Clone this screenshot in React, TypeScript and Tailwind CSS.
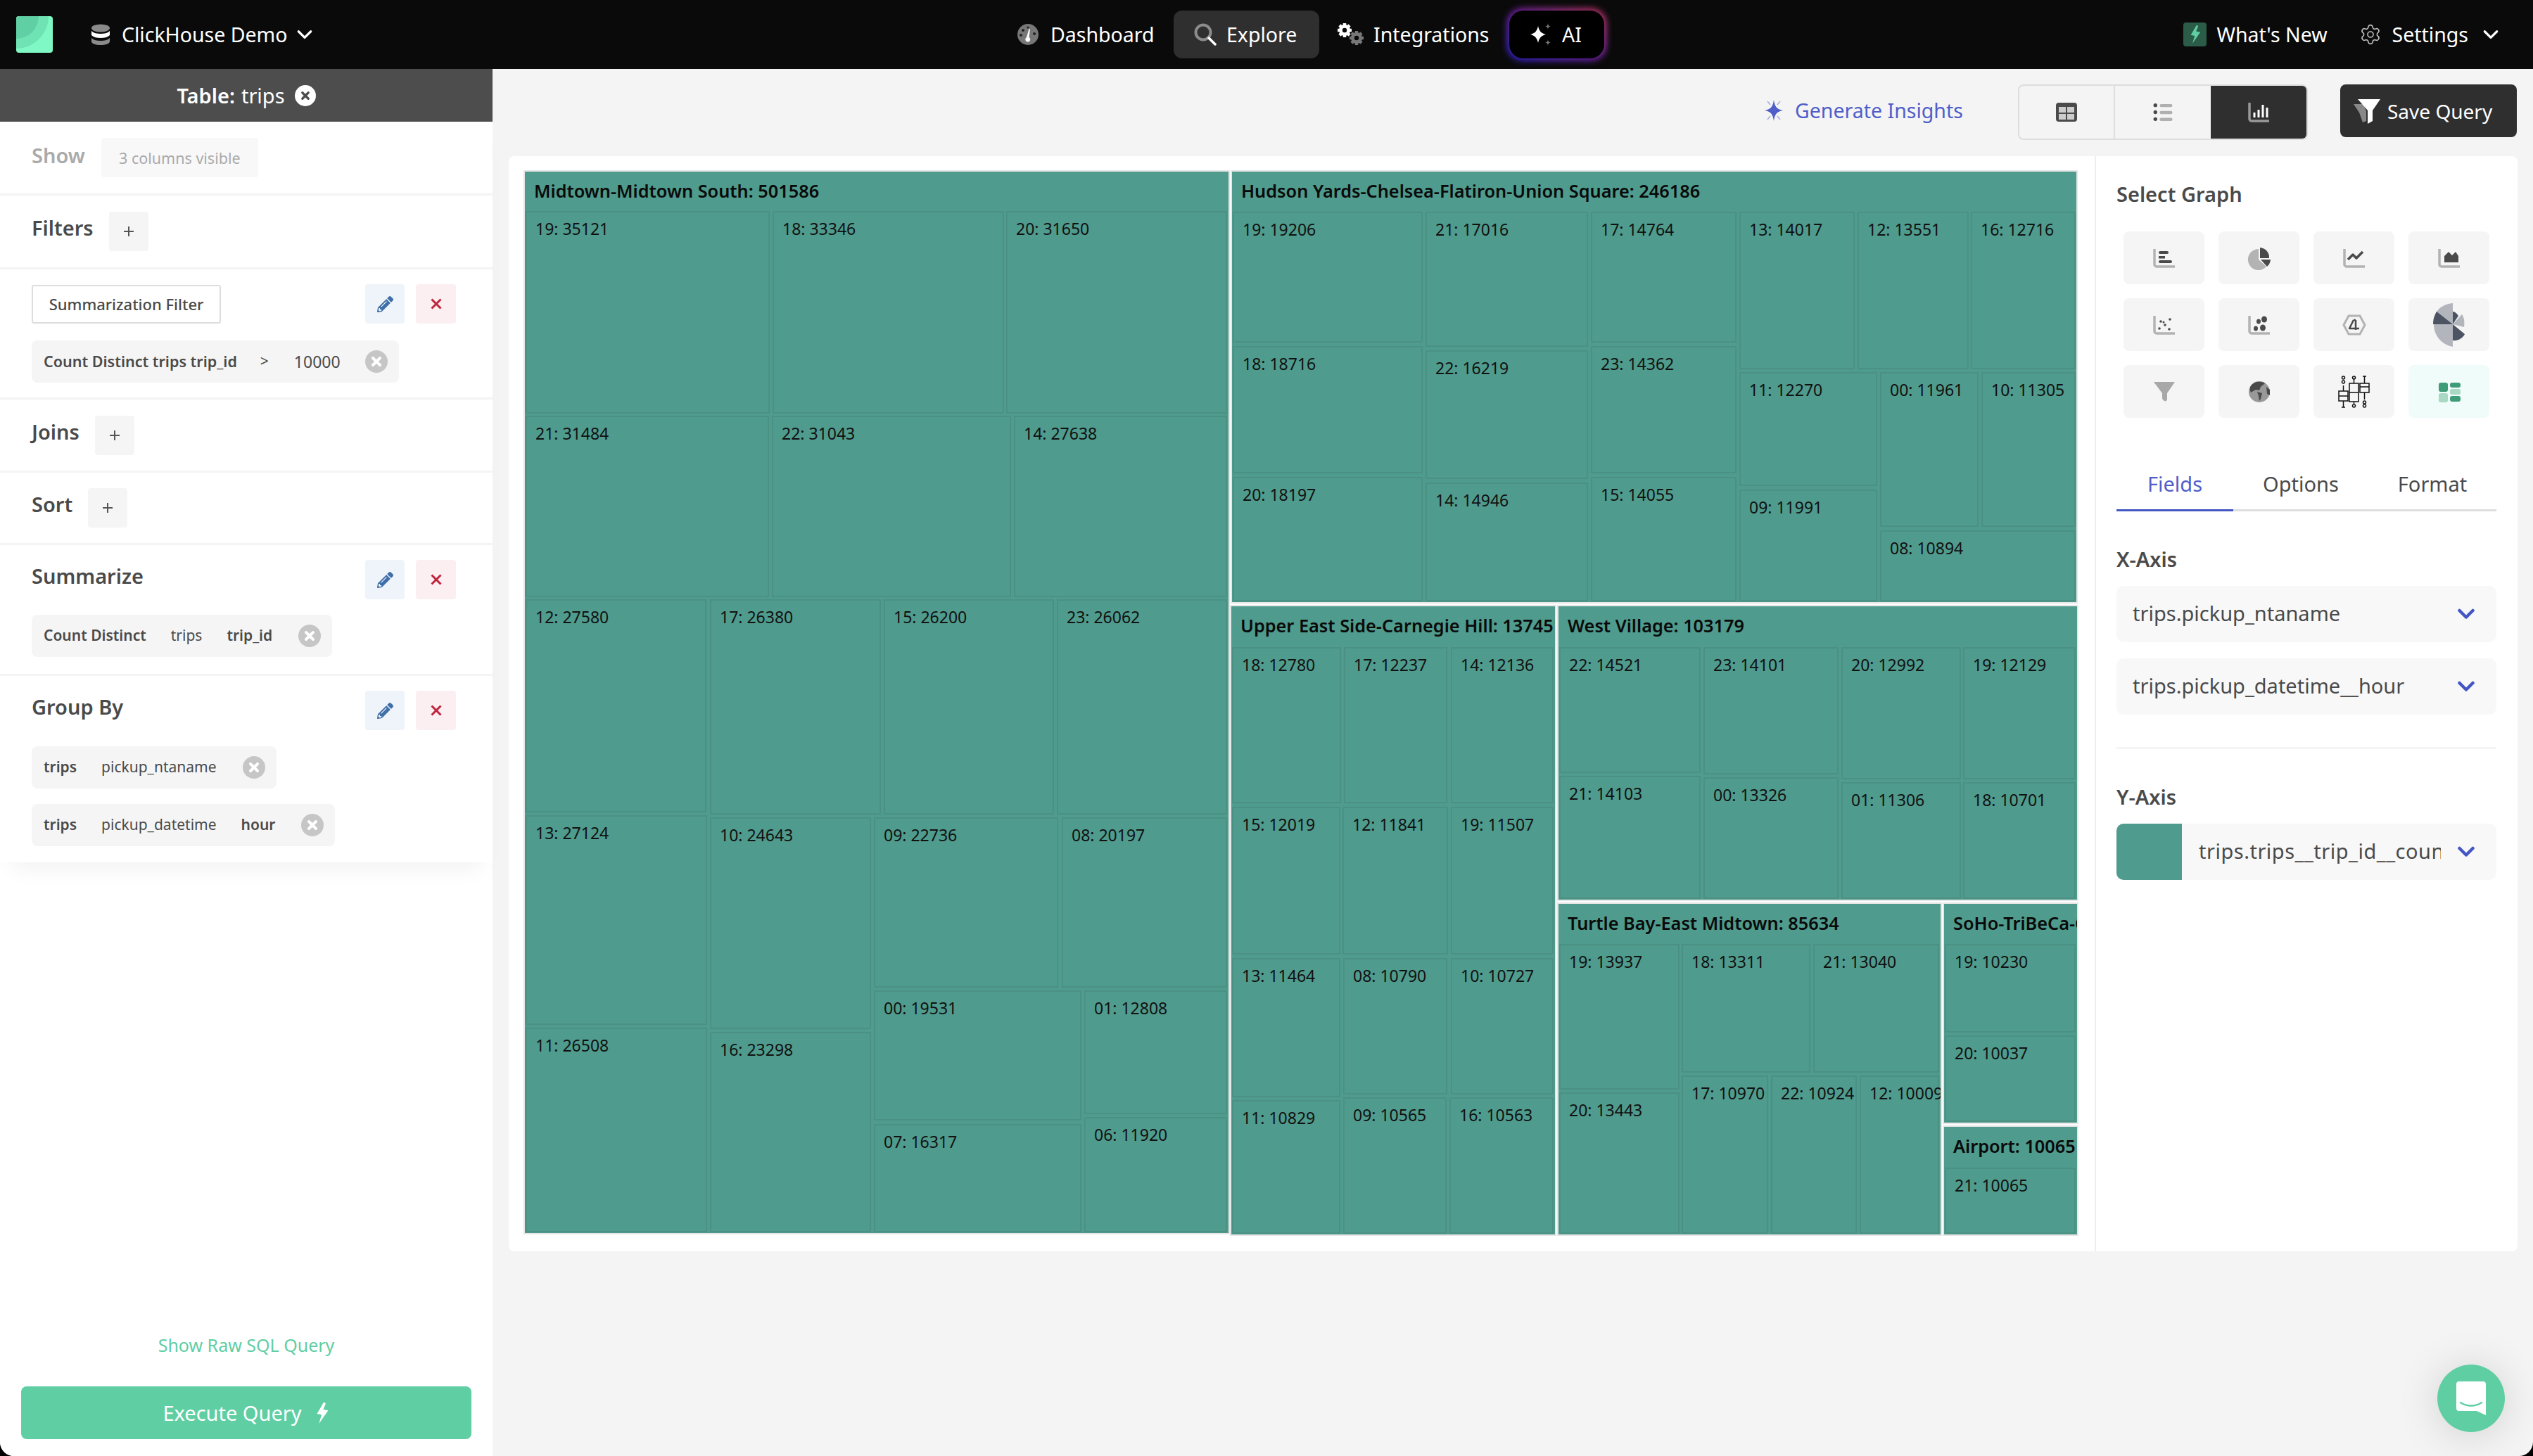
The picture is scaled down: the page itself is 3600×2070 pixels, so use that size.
import { Settings } from "lucide-react";
import { FaPencilAlt } from "react-icons/fa";

type Cell = [string, number, number, number, number];

type Group = {
  title: string;
  x0: number;
  y0: number;
  x1: number;
  y1: number;
  head: number;
  cells: Cell[];
};

// treemap origin in page pixels
const ORIGIN_X = 746;
const ORIGIN_Y = 243;

const GROUPS: Group[] = [
  {
    title: "Midtown-Midtown South: 501586",
    x0: 746, y0: 244, x1: 1746, y1: 1753, head: 54,
    cells: [
      ["19: 35121", 747, 300, 1094, 588],
      ["18: 33346", 1098, 300, 1427, 588],
      ["20: 31650", 1430, 300, 1744, 588],
      ["21: 31484", 747, 591, 1093, 849],
      ["22: 31043", 1097, 591, 1437, 849],
      ["14: 27638", 1441, 591, 1744, 849],
      ["12: 27580", 747, 852, 1004, 1155],
      ["17: 26380", 1009, 852, 1252, 1158],
      ["15: 26200", 1256, 852, 1498, 1158],
      ["23: 26062", 1502, 852, 1744, 1158],
      ["13: 27124", 747, 1159, 1005, 1457],
      ["11: 26508", 747, 1461, 1005, 1752],
      ["10: 24643", 1009, 1162, 1238, 1463],
      ["16: 23298", 1009, 1467, 1238, 1752],
      ["09: 22736", 1242, 1162, 1504, 1404],
      ["08: 20197", 1509, 1162, 1744, 1404],
      ["00: 19531", 1242, 1408, 1537, 1593],
      ["07: 16317", 1242, 1598, 1537, 1752],
      ["01: 12808", 1541, 1408, 1744, 1584],
      ["06: 11920", 1541, 1588, 1744, 1752],
    ],
  },
  {
    title: "Hudson Yards-Chelsea-Flatiron-Union Square: 246186",
    x0: 1751, y0: 244, x1: 2951, y1: 856, head: 54,
    cells: [
      ["19: 19206", 1752, 301, 2022, 487],
      ["18: 18716", 1752, 492, 2022, 673],
      ["20: 18197", 1752, 678, 2022, 855],
      ["21: 17016", 2026, 301, 2257, 493],
      ["22: 16219", 2026, 498, 2257, 681],
      ["14: 14946", 2026, 686, 2257, 855],
      ["17: 14764", 2261, 301, 2468, 487],
      ["23: 14362", 2261, 492, 2468, 673],
      ["15: 14055", 2261, 678, 2468, 855],
      ["13: 14017", 2472, 301, 2636, 525],
      ["12: 13551", 2640, 301, 2798, 525],
      ["16: 12716", 2801, 301, 2950, 525],
      ["11: 12270", 2472, 529, 2668, 691],
      ["09: 11991", 2472, 696, 2668, 855],
      ["00: 11961", 2672, 529, 2812, 749],
      ["10: 11305", 2816, 529, 2950, 749],
      ["08: 10894", 2672, 754, 2950, 855],
    ],
  },
  {
    title: "Upper East Side-Carnegie Hill: 137451",
    x0: 1750, y0: 862, x1: 2210, y1: 1755, head: 58,
    cells: [
      ["18: 12780", 1751, 920, 1906, 1142],
      ["17: 12237", 1910, 920, 2057, 1142],
      ["14: 12136", 2062, 920, 2208, 1142],
      ["15: 12019", 1751, 1147, 1905, 1357],
      ["12: 11841", 1908, 1147, 2058, 1357],
      ["19: 11507", 2062, 1147, 2208, 1357],
      ["13: 11464", 1751, 1362, 1905, 1560],
      ["08: 10790", 1909, 1362, 2057, 1556],
      ["10: 10727", 2062, 1362, 2208, 1556],
      ["11: 10829", 1751, 1564, 1905, 1754],
      ["09: 10565", 1909, 1560, 2056, 1754],
      ["16: 10563", 2060, 1560, 2208, 1754],
    ],
  },
  {
    title: "West Village: 103179",
    x0: 2215, y0: 862, x1: 2952, y1: 1279, head: 58,
    cells: [
      ["22: 14521", 2216, 920, 2417, 1099],
      ["21: 14103", 2216, 1103, 2417, 1278],
      ["23: 14101", 2421, 920, 2613, 1101],
      ["00: 13326", 2421, 1105, 2613, 1278],
      ["20: 12992", 2617, 920, 2787, 1108],
      ["01: 11306", 2617, 1112, 2787, 1278],
      ["19: 12129", 2790, 920, 2950, 1108],
      ["18: 10701", 2790, 1112, 2950, 1278],
    ],
  },
  {
    title: "Turtle Bay-East Midtown: 85634",
    x0: 2215, y0: 1285, x1: 2758, y1: 1755, head: 57,
    cells: [
      ["19: 13937", 2216, 1342, 2387, 1549],
      ["20: 13443", 2216, 1553, 2387, 1754],
      ["18: 13311", 2390, 1342, 2573, 1525],
      ["21: 13040", 2577, 1342, 2756, 1525],
      ["17: 10970", 2390, 1529, 2513, 1754],
      ["22: 10924", 2517, 1529, 2639, 1754],
      ["12: 10009", 2643, 1529, 2756, 1754],
    ],
  },
  {
    title: "SoHo-TriBeCa-Civic Center: 20267",
    x0: 2763, y0: 1285, x1: 2952, y1: 1596, head: 57,
    cells: [
      ["19: 10230", 2764, 1342, 2950, 1468],
      ["20: 10037", 2764, 1472, 2950, 1595],
    ],
  },
  {
    title: "Airport: 10065",
    x0: 2763, y0: 1602, x1: 2952, y1: 1755, head: 58,
    cells: [["21: 10065", 2764, 1660, 2950, 1754]],
  },
];

function Treemap() {
  return (
    <div className="relative h-[1512px] w-[2206px]">
      {GROUPS.map((g) => (
        <div
          key={g.title}
          className="absolute overflow-hidden bg-[#4f9b8d] shadow-[0_0_0_2px_#e6e6e6]"
          style={{
            left: g.x0 - ORIGIN_X,
            top: g.y0 - ORIGIN_Y,
            width: g.x1 - g.x0,
            height: g.y1 - g.y0,
          }}
        >
          <div className="absolute left-[13px] top-[10px] whitespace-nowrap text-[25.3px] leading-[34px] font-semibold text-[#0a0a0a]">
            {g.title}
          </div>
          {g.cells.map(([label, x0, y0, x1, y1]) => (
            <div
              key={label}
              className="absolute border-2 border-[#4a9184] pl-[12px] pt-[9px] text-[23px] leading-[28px] whitespace-nowrap text-[#111]"
              style={{
                left: x0 - g.x0,
                top: y0 - g.y0,
                width: x1 - x0,
                height: y1 - y0,
              }}
            >
              {label}
            </div>
          ))}
        </div>
      ))}
    </div>
  );
}

function Chevron({ className, stroke }: { className?: string; stroke: number }) {
  return (
    <svg className={className} viewBox="0 0 24 16" fill="none">
      <path d="M2.500 3L12 12.500 21.500 3" stroke="currentColor" strokeWidth={stroke} strokeLinecap="round" strokeLinejoin="round" />
    </svg>
  );
}

function Logo() {
  return (
    <svg width="52" height="52" viewBox="0 0 52 52">
      <defs>
        <clipPath id="logo-clip">
          <rect width="52" height="52" rx="4" />
        </clipPath>
      </defs>
      <g clipPath="url(#logo-clip)">
        <rect width="52" height="52" fill="#7ff8c6" />
        <circle cx="0" cy="0" r="46" fill="#6fe3b3" />
        <circle cx="0" cy="0" r="32" fill="#60cfa3" />
      </g>
    </svg>
  );
}

function DbIcon() {
  return (
    <svg width="28" height="30" viewBox="0 0 28 30">
      <ellipse cx="14" cy="6" rx="13" ry="5.500" fill="#8a8a8a" />
      <path d="M1 10c3 3 8 4 13 4s10-1 13-4v6c-3 3-8 4-13 4S4 19 1 16z" fill="#fff" />
      <path d="M1 20c3 3 8 4 13 4s10-1 13-4v5c0 3-6 5-13 5S1 28 1 25z" fill="#8a8a8a" />
    </svg>
  );
}

function DashboardIcon() {
  return (
    <svg width="30" height="30" viewBox="0 0 30 30">
      <circle cx="15" cy="15" r="15" fill="#777" />
      <path d="M13 19l3.500-12 1.500.5-1.500 11.500a3.500 3.500 0 1 1-3.500 0z" fill="#fff" />
      <circle cx="8" cy="9" r="2" fill="#222" />
      <circle cx="15" cy="5" r="1.600" fill="#222" />
      <circle cx="24" cy="14" r="2" fill="#222" />
      <circle cx="5" cy="16" r="2" fill="#222" />
    </svg>
  );
}

function SearchIcon() {
  return (
    <svg width="32" height="32" viewBox="0 0 32 32" fill="none">
      <circle cx="13" cy="13" r="10.500" stroke="#8c8c8c" strokeWidth="4" />
      <path d="M21 21l9 9" stroke="#fff" strokeWidth="3.500" strokeLinecap="round" />
    </svg>
  );
}

function Gear({ cx, cy, r, fill }: { cx: number; cy: number; r: number; fill: string }) {
  const teeth = [0, 45, 90, 135];
  return (
    <g fill={fill}>
      {teeth.map((a) => (
        <rect
          key={a}
          x={cx - r * 0.28}
          y={cy - r * 1.25}
          width={r * 0.56}
          height={r * 2.5}
          transform={`rotate(${a} ${cx} ${cy})`}
        />
      ))}
      <circle cx={cx} cy={cy} r={r} />
      <circle cx={cx} cy={cy} r={r * 0.4} fill="#0a0a0a" />
    </g>
  );
}

function GearsIcon() {
  return (
    <svg width="38" height="32" viewBox="0 0 38 32">
      <Gear cx={10} cy={10} r={8} fill="#fff" />
      <Gear cx={27} cy={21} r={8} fill="#777" />
    </svg>
  );
}

function SparkIcon() {
  return (
    <svg width="30" height="32" viewBox="0 0 30 32">
      <path d="M11 4c1.500 7 4 10 11 12-7 2-9.500 5-11 12-1.500-7-4-10-11-12 7-2 9.500-5 11-12z" fill="#fff" />
      <path d="M25 0c.4 3 1 4 4 4.500-3 .5-3.600 1.500-4 4.500-.4-3-1-4-4-4.500 3-.5 3.600-1.500 4-4.500z" fill="#777" />
      <path d="M25 23c.4 3 1 4 4 4.500-3 .5-3.600 1.500-4 4.500-.4-3-1-4-4-4.500 3-.5 3.600-1.500 4-4.500z" fill="#777" />
    </svg>
  );
}

function BoltIcon({ className }: { className?: string }) {
  return (
    <svg className={className} viewBox="0 0 20 32" fill="currentColor">
      <path d="M12 0L2 17l7 1.500L5 32 19 12l-7.500-1.500L15 2c.3-1.500-2-3-3-2z" />
    </svg>
  );
}

function NavItem({ children, icon, cls }: { children: string; icon: React.ReactNode; cls: string }) {
  return (
    <div className={`flex h-[68px] items-center whitespace-nowrap rounded-[12px] ${cls}`}>
      {icon}
      <span>{children}</span>
    </div>
  );
}

function Header() {
  return (
    <header className="flex h-[98px] shrink-0 items-center bg-[#0a0a0a] text-[28.5px] text-white">
      <div className="flex w-[1446px] shrink-0 items-center pl-[23px]">
        <Logo />
        <div className="ml-[54px]">
          <DbIcon />
        </div>
        <span className="ml-[16px]">ClickHouse Demo</span>
        <Chevron className="ml-[13px] w-[22px]" stroke={3.5} />
      </div>
      <NavItem icon={<div className="mr-[17px]"><DashboardIcon /></div>} cls="w-[191px]">
        Dashboard
      </NavItem>
      <NavItem icon={<div className="mr-[14px]"><SearchIcon /></div>} cls="ml-[31px] w-[207px] bg-[#2f2f2f] pl-[29px]">
        Explore
      </NavItem>
      <NavItem icon={<div className="mr-[13px]"><GearsIcon /></div>} cls="ml-[26px] w-[213px]">
        Integrations
      </NavItem>
      <div className="relative ml-[31px] h-[68px] w-[135px]">
        <div className="absolute -inset-[3px] rounded-[22px] bg-gradient-to-tr from-[#2a1fe0] via-[#7a1fb0] to-[#d0305f] blur-[5px]" />
        <div className="relative flex h-full items-center rounded-[20px] bg-black pl-[30px]">
          <SparkIcon />
          <span className="ml-[15px]">AI</span>
        </div>
      </div>
      <div className="ml-auto flex items-center pr-[49px]">
        <div className="flex h-[34px] w-[33px] items-center justify-center rounded-[4px] bg-[#2a5c48]">
          <BoltIcon className="h-[26px] w-[16px] text-[#5fcea3]" />
        </div>
        <span className="ml-[14px]">What's New</span>
        <Settings className="ml-[45px] size-[32px] text-[#bbb]" strokeWidth={1.25} />
        <span className="ml-[15px]">Settings</span>
        <Chevron className="ml-[21px] w-[22px]" stroke={3.5} />
      </div>
    </header>
  );
}

function ChipClose({ size = 32 }: { size?: number }) {
  return (
    <svg width={size} height={size} viewBox="0 0 32 32" className="shrink-0">
      <circle cx="16" cy="16" r="16" fill="#c6c6c6" />
      <path d="M11 11l10 10M21 11L11 21" stroke="#fff" strokeWidth="4" strokeLinecap="round" />
    </svg>
  );
}

function AddButton() {
  return (
    <div className="flex size-[56px] items-center justify-center rounded-[4px] bg-[#f5f5f5] text-[#555]">
      <svg width="16" height="16" viewBox="0 0 16 16">
        <path d="M8 1v14M1 8h14" stroke="#555" strokeWidth="2" />
      </svg>
    </div>
  );
}

function EditButtons() {
  return (
    <div className="flex gap-[16px]">
      <div className="flex h-[56px] w-[56px] items-center justify-center rounded-[4px] bg-[#eff4fa] text-[#3f6fa8]">
        <FaPencilAlt className="size-[23px]" />
      </div>
      <div className="flex h-[56px] w-[57px] items-center justify-center rounded-[4px] bg-[#fbeff2]">
        <svg width="16" height="16" viewBox="0 0 16 16">
          <path d="M1.500 1.500l13 13M14.500 1.500l-13 13" stroke="#c0243c" strokeWidth="3" />
        </svg>
      </div>
    </div>
  );
}

function Chip({ children }: { children: React.ReactNode }) {
  return (
    <div className="flex h-[60px] w-fit items-center rounded-[8px] bg-[#f5f5f5] pl-[17px] pr-[16px] text-[21px] text-[#4a4a4a]">
      {children}
    </div>
  );
}

function AddRow({ label, height }: { label: string; height: string }) {
  return (
    <div className={`flex items-center border-b-[3px] border-[#f4f4f4] pl-[45px] ${height}`}>
      <span className="-mt-[10px] text-[29px] font-semibold text-[#4a4a4a]">{label}</span>
      <div className="ml-[22px]">
        <AddButton />
      </div>
    </div>
  );
}

function Sidebar() {
  return (
    <aside className="flex w-[700px] shrink-0 flex-col bg-white">
      <div className="flex h-[75px] shrink-0 items-center justify-center bg-[#4d4d4d] text-[29px] text-white">
        <span className="font-semibold">Table:</span>
        <span className="ml-[9px]">trips</span>
        <svg width="30" height="30" viewBox="0 0 32 32" className="ml-[14px]">
          <circle cx="16" cy="16" r="16" fill="#fff" />
          <path d="M11.500 11.500l9 9M20.500 11.500l-9 9" stroke="#4d4d4d" strokeWidth="3.500" strokeLinecap="round" />
        </svg>
      </div>

      <div className="rounded-t-[8px] shadow-[0_24px_30px_-16px_rgba(0,0,0,0.06)]">
        {/* Show */}
        <div className="flex h-[105px] items-center border-b-[3px] border-[#f4f4f4] pl-[45px]">
          <span className="-mt-[6px] text-[29px] font-semibold text-[#aaa]">Show</span>
          <div className="ml-[23px] flex h-[56px] w-[223px] items-center justify-center rounded-[4px] bg-[#f8f8f8] pt-[2px] text-[21.5px] text-[#aaa]">
            3 columns visible
          </div>
        </div>

        <AddRow label="Filters" height="h-[105px]" />

        {/* Summarization filter */}
        <div className="h-[185px] border-b-[3px] border-[#f4f4f4] px-[45px] pt-[21px]">
          <div className="flex items-center justify-between pr-[7px]">
            <div className="flex h-[55px] w-[269px] items-center justify-center rounded-[3px] border-2 border-[#ddd] text-[22px] font-medium text-[#4a4a4a]">
              Summarization Filter
            </div>
            <EditButtons />
          </div>
          <div className="mt-[24px]">
            <Chip>
              <span className="text-[21.5px] font-semibold">Count Distinct trips trip_id</span>
              <span className="ml-[33px]">&gt;</span>
              <span className="ml-[36px] text-[23px]">10000</span>
              <div className="ml-[35px]">
                <ChipClose />
              </div>
            </Chip>
          </div>
        </div>

        <AddRow label="Joins" height="h-[104px]" />
        <AddRow label="Sort" height="h-[103px]" />

        {/* Summarize */}
        <div className="h-[186px] border-b-[3px] border-[#f4f4f4] px-[45px] pt-[21px]">
          <div className="flex items-start justify-between pr-[7px]">
            <span className="-mt-[1px] text-[29px] font-semibold leading-[48px] text-[#4a4a4a]">Summarize</span>
            <EditButtons />
          </div>
          <div className="mt-[22px]">
            <Chip>
              <span className="font-semibold">Count Distinct</span>
              <span className="ml-[35px]">trips</span>
              <span className="ml-[35px] font-semibold">trip_id</span>
              <div className="ml-[37px]">
                <ChipClose />
              </div>
            </Chip>
          </div>
        </div>

        {/* Group by */}
        <div className="h-[265px] px-[45px] pt-[21px]">
          <div className="flex items-start justify-between pr-[7px]">
            <span className="-mt-[1px] text-[29px] font-semibold leading-[48px] text-[#4a4a4a]">Group By</span>
            <EditButtons />
          </div>
          <div className="mt-[23px] flex flex-col gap-[22px]">
            <Chip>
              <span className="font-semibold">trips</span>
              <span className="ml-[35px]">pickup_ntaname</span>
              <div className="ml-[37px]">
                <ChipClose />
              </div>
            </Chip>
            <Chip>
              <span className="font-semibold">trips</span>
              <span className="ml-[35px]">pickup_datetime</span>
              <span className="ml-[35px] font-semibold">hour</span>
              <div className="ml-[37px]">
                <ChipClose />
              </div>
            </Chip>
          </div>
        </div>
      </div>

      <div className="mt-auto text-center text-[25px] leading-[34px] text-[#5fcea3]">Show Raw SQL Query</div>
      <div className="mb-[24px] ml-[30px] mt-[42px] flex h-[75px] w-[640px] items-center justify-center rounded-[8px] bg-[#5fcea3] text-[29px] text-white">
        Execute Query
        <BoltIcon className="ml-[18px] h-[30px] w-[22px]" />
      </div>
    </aside>
  );
}

function Toolbar() {
  return (
    <div className="flex h-[124px] shrink-0 items-start pt-[22px]">
      <div className="ml-[1804px] mt-[16px] flex w-[285px] items-center whitespace-nowrap text-[28.5px] text-[#4f5ec9]">
        <svg width="34" height="38" viewBox="0 0 34 38" className="shrink-0">
          <path d="M17 4c1.500 10 4 13 13 15-9 2-11.500 5-13 15-1.500-10-4-13-13-15 9-2 11.500-5 13-15z" fill="#4f5ec9" />
          <path d="M8 6l4 5M26 6l-4 5M8 32l4-5M26 32l-4-5" stroke="#a5abe4" strokeWidth="1.500" />
        </svg>
        <span className="ml-[13px]">Generate Insights</span>
      </div>
      <div className="ml-[79px] flex h-[79px] w-[412px] overflow-hidden rounded-[8px] border-2 border-[#ddd]">
        <div className="flex w-[136px] items-center justify-center border-r-2 border-[#ddd]">
          <svg width="30" height="27" viewBox="0 0 30 27">
            <rect width="30" height="27" rx="4" fill="#4a4a4a" />
            <rect x="4" y="6" width="10" height="8" fill="#ccc" />
            <rect x="16" y="6" width="10" height="8" fill="#ccc" />
            <rect x="4" y="16" width="10" height="8" fill="#ccc" />
            <rect x="16" y="16" width="10" height="8" fill="#ccc" />
          </svg>
        </div>
        <div className="flex w-[136px] items-center justify-center">
          <svg width="30" height="25" viewBox="0 0 30 28">
            <rect y="0" width="6" height="6" rx="3" fill="#4a4a4a" />
            <rect y="11" width="6" height="6" rx="3" fill="#4a4a4a" />
            <rect y="22" width="6" height="6" rx="3" fill="#4a4a4a" />
            <rect x="10" y="1" width="20" height="5" rx="2" fill="#b0b0b0" />
            <rect x="10" y="12" width="20" height="5" rx="2" fill="#b0b0b0" />
            <rect x="10" y="23" width="20" height="5" rx="2" fill="#b0b0b0" />
          </svg>
        </div>
        <div className="flex flex-1 items-center justify-center bg-[#2f2f2f]">
          <svg width="30" height="28" viewBox="0 0 30 28" fill="none">
            <path d="M2 0v23a3 3 0 0 0 3 3h25" stroke="#999" strokeWidth="3.500" />
            <path d="M9 14v7M15 10v11M21 3v18M27 7v14" stroke="#fff" strokeWidth="3" />
          </svg>
        </div>
      </div>
      <div className="ml-[46px] flex h-[75px] w-[251px] items-center rounded-[8px] bg-[#2f2f2f] pl-[19px] text-[28px] text-white">
        <svg width="38" height="36" viewBox="0 0 38 36">
          <path d="M0 8h14l4 10v14l-5 2-5-14z" fill="#888" />
          <path d="M6 1h32L27 17v15l-7 4V17z" fill="#fff" />
        </svg>
        <span className="ml-[10px]">Save Query</span>
      </div>
    </div>
  );
}

const AXIS = "M2 1v22a3 3 0 0 0 3 3h26";
const DARK = "#4a4a4a";
const GREY = "#b3b3b3";

function GraphIcon({ children }: { children: React.ReactNode }) {
  return (
    <svg width="32" height="28" viewBox="0 0 32 28" fill="none" className="overflow-visible">
      {children}
    </svg>
  );
}

const GRAPHS: React.ReactNode[] = [
  <GraphIcon key="bar">
    <path d={AXIS} stroke={GREY} strokeWidth="3.500" />
    <rect x="8" y="4" width="14" height="4" rx="2" fill={DARK} />
    <rect x="8" y="11" width="9" height="3.500" fill={DARK} />
    <rect x="8" y="17" width="19" height="4" rx="2" fill={DARK} />
  </GraphIcon>,
  <GraphIcon key="pie">
    <path d="M15 1a15 15 0 1 0 11 25L15 16z" fill={GREY} />
    <path d="M17 -1a14 14 0 0 1 13 15H17z" fill={DARK} />
    <path d="M18 16h14a15 15 0 0 1-5 10z" fill={DARK} />
  </GraphIcon>,
  <GraphIcon key="line">
    <path d={AXIS} stroke={GREY} strokeWidth="3.500" />
    <path d="M7 16l7-7 5 5 9-9" stroke={DARK} strokeWidth="3.500" strokeLinejoin="round" />
  </GraphIcon>,
  <GraphIcon key="area">
    <path d={AXIS} stroke={GREY} strokeWidth="3.500" />
    <path d="M9 20V11l6-6 5 5 5-5 4 6v9z" fill={DARK} />
  </GraphIcon>,
  <GraphIcon key="scatter">
    <path d={AXIS} stroke={GREY} strokeWidth="3.500" />
    <g fill={DARK}>
      <circle cx="11" cy="9" r="1.800" />
      <circle cx="24" cy="6" r="1.800" />
      <circle cx="17" cy="14" r="1.800" />
      <circle cx="9" cy="19" r="1.800" />
      <circle cx="23" cy="20" r="1.800" />
      <circle cx="15" cy="10" r="1.500" />
    </g>
  </GraphIcon>,
  <GraphIcon key="bubble">
    <path d={AXIS} stroke={GREY} strokeWidth="3.500" />
    <g fill={DARK}>
      <ellipse cx="15" cy="9" rx="3" ry="3.500" />
      <ellipse cx="23" cy="6" rx="4" ry="4.500" />
      <ellipse cx="11" cy="19" rx="3" ry="3.500" />
      <ellipse cx="21" cy="18" rx="4" ry="4.500" />
    </g>
  </GraphIcon>,
  <GraphIcon key="radar">
    <path d="M8 1h16l7 13-7 13H8L1 14z" stroke={GREY} strokeWidth="3" />
    <path d="M15 7L9 19h14M18 7v14M15 7h3" stroke={DARK} strokeWidth="2.500" strokeLinejoin="round" />
  </GraphIcon>,
  <svg key="rose" width="46" height="62" viewBox="0 0 46 62">
    <path d="M28 0v30L4 14C8 6 17 1 28 0z" fill="#b2b6bc" />
    <path d="M28 30H0c0-6 1-11 5-18z" fill="#4c5363" />
    <path d="M28 30V12c3 0 6 3 8 6z" fill="#4c5363" />
    <path d="M28 30l13-14c3 4 4 10 3 18z" fill="#b2b6bc" />
    <path d="M28 30l17 14c-3 6-10 10-17 9z" fill="#4c5363" />
    <path d="M28 30v32C12 59 1 46 1 30z" fill="#b2b6bc" />
  </svg>,
  <GraphIcon key="funnel">
    <path d="M1 0h30L20 16v8c0 3-2 4-4 3-1-1-3-2-3-4v-7z" fill="#a8a8a8" />
  </GraphIcon>,
  <GraphIcon key="globe">
    <ellipse cx="16" cy="14" rx="15" ry="15" fill="#999" />
    <path d="M8 2c4-3 12-3 16 0l-6 5-2 5-5-1-7 4C1 9 4 4 8 2z" fill={DARK} />
    <path d="M13 14l7 2-2 8-2 3-1-7z" fill={DARK} />
    <path d="M26 7l5 4v8l-4-2z" fill={DARK} />
  </GraphIcon>,
  <svg key="box" width="46" height="46" viewBox="0 0 46 46" fill="none" stroke="#111" strokeWidth="1.500">
    <rect x="1" y="22" width="13" height="14" />
    <path d="M1 29h13M7.500 14v8M7.500 36v9M5 45h5" />
    <circle cx="7.500" cy="3" r="2" />
    <circle cx="7.500" cy="9" r="2" />
    <rect x="16" y="11" width="13" height="26" />
    <path d="M16 24h13M22.500 4v7M22.500 37v3" />
    <circle cx="22.500" cy="3" r="2" />
    <circle cx="22.500" cy="43" r="2" />
    <rect x="31" y="11" width="13" height="13" />
    <path d="M31 16h13M37.500 1v10M37.500 24v10M35 1h5" />
    <circle cx="37.500" cy="38" r="2" />
    <circle cx="37.500" cy="43" r="2" />
  </svg>,
  <GraphIcon key="tree">
    <rect x="1" y="1" width="13" height="13" rx="3" fill="#3f9c78" />
    <rect x="17" y="1" width="15" height="7" rx="3" fill="#3f9c78" />
    <rect x="1" y="16" width="13" height="13" rx="3" fill="#a9d8c4" />
    <rect x="17" y="10" width="15" height="8" rx="3" fill="#a9d8c4" />
    <rect x="17" y="20" width="15" height="8" rx="3" fill="#3f9c78" />
  </GraphIcon>,
];

function FieldSelect({ text, swatch }: { text: string; swatch?: boolean }) {
  return (
    <div className="flex h-[80px] items-center overflow-hidden rounded-[10px] bg-[#f8f8f8] text-[#4a4a4a]">
      {swatch && <div className="h-full w-[93px] shrink-0 bg-[#4f9b8d]" />}
      <div className={`overflow-hidden whitespace-nowrap pb-[2px] text-[29px] ${swatch ? "ml-[24px] w-[344px] tracking-[0.5px]" : "ml-[23px] flex-1"}`}>
        {text}
      </div>
      <Chevron className="ml-auto mr-[31px] w-[24px] shrink-0 text-[#4356c4]" stroke={4.5} />
    </div>
  );
}

function RightPanel() {
  return (
    <div className="w-[601px] shrink-0 border-l-2 border-[#eee] pl-[29px] pr-[30px]">
      <div className="mt-[34px] text-[29px] leading-[40px] font-semibold text-[#4a4a4a]">Select Graph</div>
      <div className="ml-[10px] mt-[33px] grid w-[520px] grid-cols-4 gap-[20px]">
        {GRAPHS.map((icon, i) => (
          <div
            key={i}
            className={`flex h-[75px] items-center justify-center rounded-[8px] ${i === 11 ? "bg-[#effcf9]" : "bg-[#f5f5f5]"}`}
          >
            {icon}
          </div>
        ))}
      </div>
      <div className="mt-[63px] flex h-[70px] border-b-[3px] border-[#ddd] text-[29px] text-[#4a4a4a]">
        <div className="-mb-[3px] flex w-[166px] items-center justify-center border-b-[3px] border-[#4356c4] pb-[6px] text-[#4f5ec9]">Fields</div>
        <div className="flex w-[192px] items-center justify-center pb-[6px]">Options</div>
        <div className="flex w-[182px] items-center justify-center pb-[6px]">Format</div>
      </div>
      <div className="mt-[48px] text-[29px] leading-[40px] font-semibold text-[#4a4a4a]">X-Axis</div>
      <div className="mt-[18px] flex flex-col gap-[23px]">
        <FieldSelect text="trips.pickup_ntaname" />
        <FieldSelect text="trips.pickup_datetime__hour" />
      </div>
      <div className="mt-[46px] h-[3px] bg-[#f5f5f5]" />
      <div className="mt-[48px] text-[29px] leading-[40px] font-semibold text-[#4a4a4a]">Y-Axis</div>
      <div className="mt-[18px]">
        <FieldSelect swatch text="trips.trips__trip_id__count" />
      </div>
    </div>
  );
}

function ChatBubble() {
  return (
    <div className="absolute bottom-[34px] right-[40px] flex size-[96px] items-center justify-center rounded-full bg-[#5fcea3] shadow-[0_4px_60px_rgba(0,0,0,0.15)]">
      <svg width="42" height="48" viewBox="0 0 42 48">
        <path d="M4 0h34a4 4 0 0 1 4 4v44l-13-6H4a4 4 0 0 1-4-4V4a4 4 0 0 1 4-4z" fill="#fff" />
        <path d="M6 30c9 6 21 6 30 0" stroke="#5fcea3" strokeWidth="2.500" strokeLinecap="round" fill="none" />
      </svg>
    </div>
  );
}

export default function App() {
  return (
    <div className="flex h-[2070px] w-[3600px] flex-col overflow-hidden bg-black font-['Noto_Sans','Liberation_Sans',sans-serif]">
      <Header />
      <div className="relative flex min-h-0 flex-1 overflow-hidden rounded-b-[20px] bg-[#f4f4f4]">
        <Sidebar />
        <main className="min-w-0 flex-1">
          <Toolbar />
          <div className="ml-[23px] flex h-[1557px] w-[2855px] rounded-[8px] bg-white">
            <div className="w-[2254px] shrink-0 pl-[23px] pt-[21px]">
              <Treemap />
            </div>
            <RightPanel />
          </div>
        </main>
        <ChatBubble />
      </div>
    </div>
  );
}
